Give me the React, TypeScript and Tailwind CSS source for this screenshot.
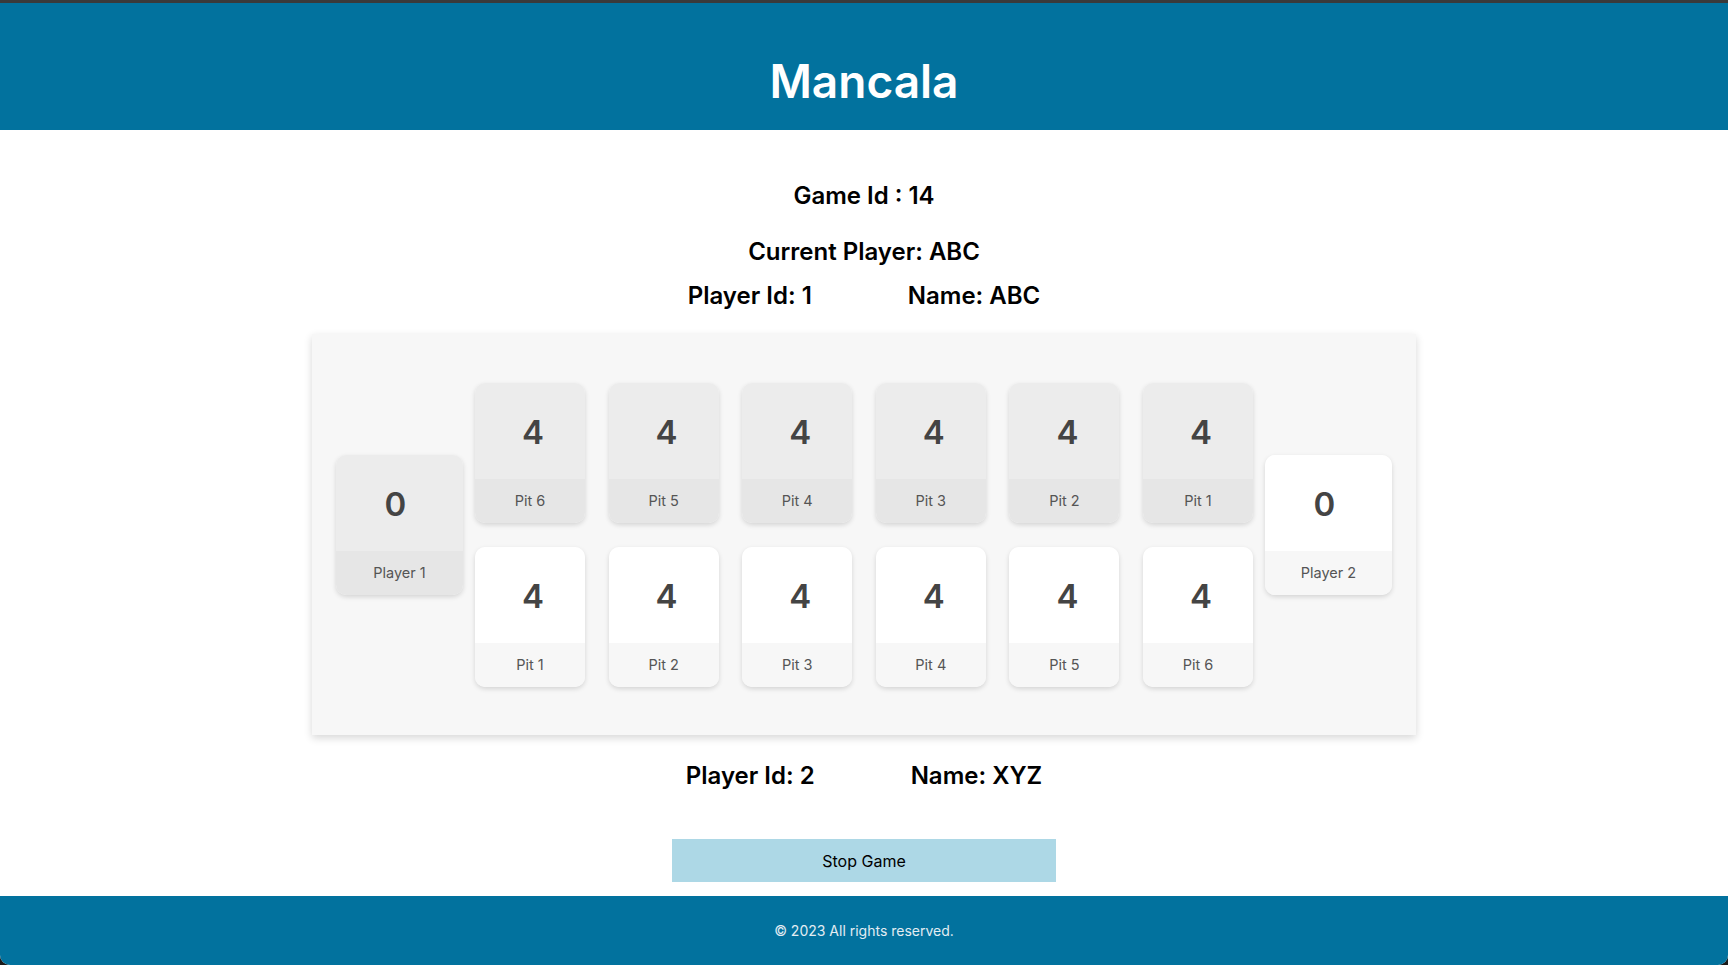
import React from 'react'

interface PitProps {
  value: number
  label: string
  dark: boolean
  store?: boolean
}

// A single pit or store card
function Pit({ value, label, dark, store }: PitProps) {
  return (
    <div
      className={`flex flex-col rounded-[10px] overflow-hidden shadow-[0_2px_5px_rgba(0,0,0,0.14)] ${
        store ? 'w-[127px]' : 'w-[110px]'
      } h-[140px]`}
    >
      <div
        className={`h-[96px] flex items-center justify-center pt-[4px] text-[33px] font-semibold text-[#444] ${
          dark ? 'bg-[#ececec]' : 'bg-white'
        } ${store ? 'pr-[8px]' : 'pl-[6px]'}`}
      >
        {value}
      </div>
      <div
        className={`flex-1 flex items-center justify-center text-[14.5px] text-[#555] ${
          dark ? 'bg-[#e6e6e6]' : 'bg-[#f7f7f7]'
        }`}
      >
        {label}
      </div>
    </div>
  )
}

function PlayerRow({ id, name }: { id: number; name: string }) {
  return (
    <div className="flex justify-center gap-[96px] text-[24px] leading-8 font-semibold text-black">
      <span>Player Id: {id}</span>
      <span>Name: {name}</span>
    </div>
  )
}

export default function App() {
  const topPits = [6, 5, 4, 3, 2, 1]
  const bottomPits = [1, 2, 3, 4, 5, 6]

  return (
    <div
      className="h-screen bg-[#1a1a1a] flex flex-col"
      style={{ fontFamily: 'Inter, "Noto Sans", sans-serif' }}
    >
      <div className="h-[3px] bg-[#3a3a3a]" />
      <div className="flex-1 flex flex-col bg-white rounded-b-[10px] overflow-hidden">
        <header className="h-[127px] bg-[#02729e] flex justify-center pt-[54px]">
          <h1 className="text-[46px] leading-[48px] font-semibold text-white">Mancala</h1>
        </header>

        <main className="flex-1 flex flex-col items-center">
          <h2 className="mt-[50px] text-[24px] leading-8 font-semibold text-black">Game Id : 14</h2>
          <h2 className="mt-[24px] text-[24px] leading-8 font-semibold text-black">Current Player: ABC</h2>
          <div className="mt-[12px] w-full">
            <PlayerRow id={1} name="ABC" />
          </div>

          <div className="mt-[22px] w-[1104px] h-[401px] bg-[#f7f7f7] shadow-[0_3px_8px_rgba(0,0,0,0.16)] flex items-center px-[24px]">
            <div className="mb-[20px]">
              <Pit value={0} label="Player 1" dark store />
            </div>
            <div className="ml-[12px] flex flex-col gap-[24px]">
              <div className="flex gap-[23.6px]">
                {topPits.map(n => (
                  <Pit key={`t${n}`} value={4} label={`Pit ${n}`} dark />
                ))}
              </div>
              <div className="flex gap-[23.6px]">
                {bottomPits.map(n => (
                  <Pit key={`b${n}`} value={4} label={`Pit ${n}`} dark={false} />
                ))}
              </div>
            </div>
            <div className="ml-[12px] mb-[20px]">
              <Pit value={0} label="Player 2" dark={false} store />
            </div>
          </div>

          <div className="mt-[25px] w-full">
            <PlayerRow id={2} name="XYZ" />
          </div>

          <button className="mt-[47px] w-[384px] h-[43px] bg-[#add8e6] text-[16px] text-black">
            Stop Game
          </button>
        </main>

        <footer className="h-[69px] bg-[#02729e] flex items-center justify-center text-[14px] text-[#e3edf3]">
          © 2023 All rights reserved.
        </footer>
      </div>
    </div>
  )
}
